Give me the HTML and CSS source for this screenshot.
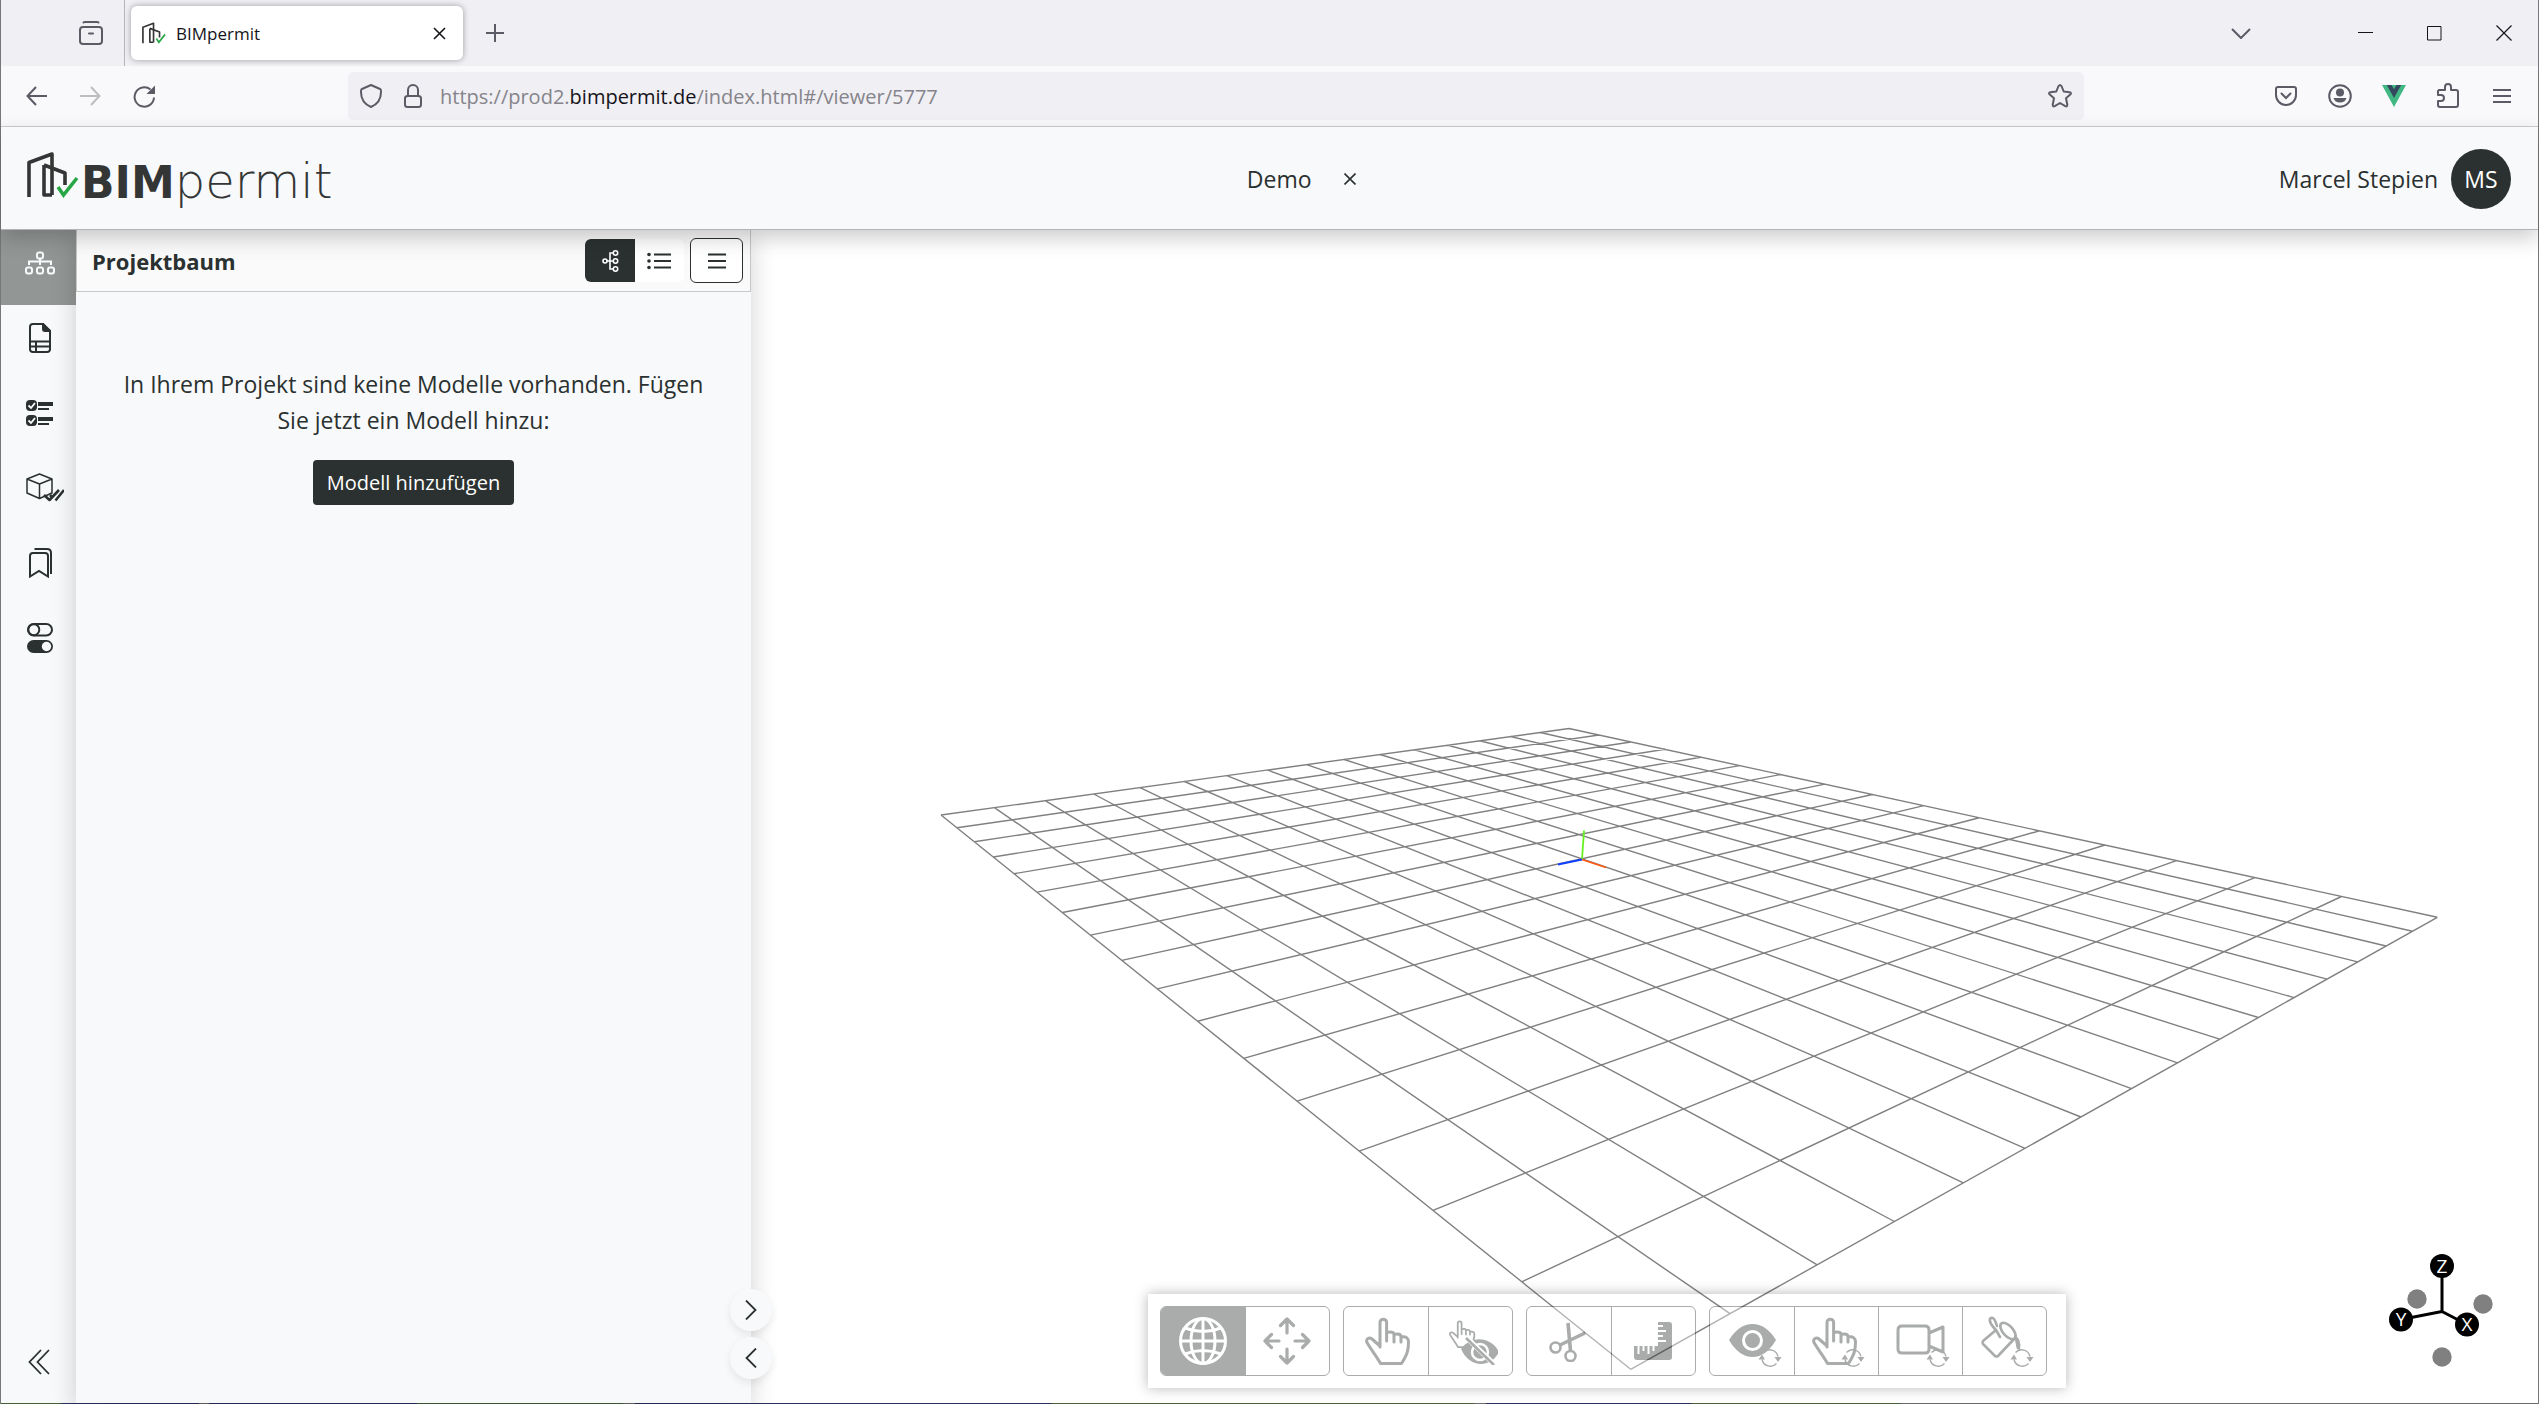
FILE: index.html
```html
<!DOCTYPE html>
<html lang="de">
<head>
<meta charset="utf-8">
<title>BIMpermit</title>
<link rel="stylesheet" href="styles.css">
</head>
<body>
<svg class="defs" aria-hidden="true">
  <symbol id="mark" viewBox="0 0 52 46">
    <g fill="none" stroke="#343635" stroke-width="3.6" stroke-linejoin="round">
      <path d="M2 45V10.500L25 2v41"/>
      <path d="M17 13v30h8M17 13l21 8v12"/>
    </g>
    <path d="M31 35l5.500 8L50 26" fill="none" stroke="#28a745" stroke-width="3.600"/>
  </symbol>
  <symbol id="hand" viewBox="0 0 48 48">
    <path d="M15 30V5.500a3.300 3.300 0 0 1 6.600 0V24M21.600 15.500c4-1 7.400-.5 7.400 2V25M29 17.500c4-1 7-.5 7 2.500v5M36 20c5-1 7.500 1 7.500 5 0 8-1 12-7 21.500H15.500C12 40 7 34 2 25.500c-1.500-4 2.500-5.500 5-3.500l8 7" fill="none" stroke="currentColor" stroke-width="3" stroke-linecap="round" stroke-linejoin="round"/>
  </symbol>
  <symbol id="cycle" viewBox="0 0 24 20">
    <path d="M5.500 4.500A8.500 8.500 0 0 1 20 8.500M18.500 15.500A8.500 8.500 0 0 1 4 11.500" fill="none" stroke="currentColor" stroke-width="1.400"/>
    <path d="M.5 11.500l3.500-5 3 5zM16.500 9h7L20 14z" fill="currentColor"/>
  </symbol>
</svg>

<div class="window">
  <div class="tabbar">
    <button class="tool recent" aria-label="Tabs"><svg width="24" height="24" viewBox="0 0 24 24" fill="none" stroke="#5b5b66" stroke-width="2" stroke-linecap="round"><path d="M4.500 1.500C5 1 5.500 1 6 1h12q1 0 1.500.5"/><rect x="1" y="6" width="22" height="17" rx="3"/><path d="M10 12.500h4"/></svg></button>
    <div class="tab">
      <svg class="favicon" width="24" height="22"><use href="#mark"/></svg>
      <span class="tab-title">BIMpermit</span>
      <button class="tab-close" aria-label="Tab schließen"><svg width="13" height="13" viewBox="0 0 13 13" stroke="#15141a" stroke-width="1.600"><path d="M1 1l11 11M12 1L1 12"/></svg></button>
    </div>
    <button class="tool" aria-label="Neuer Tab"><svg width="18" height="18" viewBox="0 0 18 18" stroke="#5b5b66" stroke-width="2"><path d="M9 0v18M0 9h18"/></svg></button>
    <span class="spring"></span>
    <button class="tool list-tabs" aria-label="Alle Tabs"><svg width="20" height="11" viewBox="0 0 20 11" fill="none" stroke="#5b5b66" stroke-width="2"><path d="M1 1l9 9 9-9"/></svg></button>
    <button class="winbtn" aria-label="Minimieren"><svg width="15" height="15" viewBox="0 0 15 15" stroke="#15141a"><path d="M0 6.500h15"/></svg></button>
    <button class="winbtn" aria-label="Maximieren"><svg width="15" height="15" viewBox="0 0 15 15" stroke="#15141a" fill="none"><path d="M.5.5h13.500v13.500H.5z"/></svg></button>
    <button class="winbtn" aria-label="Schließen"><svg width="16" height="16" viewBox="0 0 16 16" stroke="#15141a" stroke-width="1.200"><path d="M.5.5l15 15M15.500.5l-15 15"/></svg></button>
  </div>

  <div class="navbar">
    <button class="tool" aria-label="Zurück"><svg width="21" height="20" viewBox="0 0 21 20" fill="none" stroke="#5b5b66" stroke-width="2"><path d="M10 1L1.500 10l8.500 9M1.500 10H21"/></svg></button>
    <button class="tool" aria-label="Vor"><svg width="21" height="20" viewBox="0 0 21 20" fill="none" stroke="#bdbdc2" stroke-width="2"><path d="M11 1l8.500 9-8.500 9M19.500 10H0"/></svg></button>
    <button class="tool" aria-label="Neu laden"><svg width="23" height="23" viewBox="0 0 23 23"><path d="M21 12.500A9.700 9.700 0 1 1 17.500 4.500" fill="none" stroke="#5b5b66" stroke-width="2"/><path d="M22 .5V9h-8.500z" fill="#5b5b66"/></svg></button>
    <div class="urlbar">
      <svg width="22" height="24" viewBox="0 0 22 24" fill="none" stroke="#5b5b66" stroke-width="2" stroke-linejoin="round"><path d="M11 1l9 4c1 0 1 1 1 3 0 7-3 12-10 15C4 20 1 15 1 8c0-2 0-3 1-3z"/></svg>
      <svg width="18" height="24" viewBox="0 0 18 24" fill="none" stroke="#5b5b66" stroke-width="2"><rect x="1" y="12" width="16" height="11" rx="2.500"/><path d="M4 12V6a5 5 0 0 1 10 0v6"/></svg>
      <span class="url">https://prod2.<b>bimpermit.de</b>/index.html#/viewer/5777</span>
      <button class="star" aria-label="Lesezeichen"><svg width="24" height="24" viewBox="0 0 24 24" fill="none" stroke="#5b5b66" stroke-width="2" stroke-linejoin="round"><path d="M12 1l1.500 1 2.200 5.500 6 .7c1.300.3 1.500 1.300.8 2L18 14.200l1.300 6.500c0 1.500-.8 2-2 1.500L12 19l-5.300 3.200c-1.200.5-2 0-2-1.500L6 14.200l-4.500-4c-.7-.7-.5-1.700.8-2l6-.7L10.500 2z"/></svg></button>
    </div>
    <button class="tool" aria-label="Pocket"><svg width="22" height="20" viewBox="0 0 22 20" fill="none" stroke="#5b5b66" stroke-width="2" stroke-linecap="round"><path d="M3 1h16q2 0 2 2v6a10 10 0 0 1-20 0V3q0-2 2-2z"/><path d="M6.500 7.500L11 12l4.500-4.500"/></svg></button>
    <button class="tool" aria-label="Konto"><svg width="24" height="24" viewBox="0 0 24 24"><circle cx="12" cy="12" r="10.800" fill="none" stroke="#5b5b66" stroke-width="2"/><circle cx="12" cy="8.500" r="4" fill="#5b5b66"/><path d="M5.500 14h13q-1.500 4.500-6.500 4.500T5.500 14z" fill="#5b5b66"/></svg></button>
    <button class="tool" aria-label="Vue"><svg width="24" height="22" viewBox="0 0 24 22"><path d="M0 0h24L12 22z" fill="#41b883"/><path d="M4.800 0h4.700L12 4.200 14.500 0h4.700L12 13z" fill="#35495e"/></svg></button>
    <button class="tool" aria-label="Erweiterungen"><svg width="22" height="26" viewBox="0 0 22 26" fill="none" stroke="#5b5b66" stroke-width="2" stroke-linejoin="round"><path d="M2 7h6V4a3 3 0 0 1 6 0v3h5q2 0 2 2v13q0 2-2 2H3q-2 0-2-2v-4h3a3 3 0 0 0 0-6H1V8z"/></svg></button>
    <button class="tool" aria-label="Menü"><svg width="18" height="16" viewBox="0 0 18 16" stroke="#5b5b66" stroke-width="2"><path d="M0 2h18M0 8h18M0 14h18"/></svg></button>
  </div>

  <header class="header">
    <a class="logo" href="#"><svg width="52" height="46"><use href="#mark"/></svg><span class="logo-bim">BIM</span><span class="logo-permit">permit</span></a>
    <div class="project"><span>Demo</span><button class="project-close" aria-label="Projekt schließen"><svg width="12" height="12" viewBox="0 0 12 12" stroke="#2a3130" stroke-width="1.600"><path d="M.5.5l11 11M11.500.5l-11 11"/></svg></button></div>
    <div class="user"><span>Marcel Stepien</span><span class="avatar">MS</span></div>
  </header>

  <main class="main">
    <nav class="rail">
      <button class="rail-btn active" aria-label="Projektbaum"><svg width="30" height="24" viewBox="0 0 30 24" fill="none" stroke="#f8f9fb" stroke-width="2"><rect x="12" y="1.500" width="6" height="6" rx="2"/><path d="M15 8v6M4 14v-3.500h22V14"/><rect x="1" y="16.500" width="6" height="6" rx="2"/><rect x="12" y="16.500" width="6" height="6" rx="2"/><rect x="23" y="16.500" width="6" height="6" rx="2"/></svg></button>
      <button class="rail-btn" aria-label="Dokumente"><svg width="22" height="30" viewBox="0 0 22 30" fill="none" stroke="#2a3130" stroke-width="2"><path d="M4 1h10l7 7v18q0 3-3 3H4q-3 0-3-3V4q0-3 3-3zM1 18.500h20M1 23.500h20M7 18.500V29"/><path d="M14 1v5q0 2 2 2h5z" fill="#2a3130"/></svg></button>
      <button class="rail-btn" aria-label="Prüfliste"><svg width="30" height="28" viewBox="0 0 30 28"><g fill="#2a3130"><rect x="1" y="1" width="11" height="11" rx="4"/><rect x="1" y="16" width="11" height="11" rx="4"/><path d="M13 3h15v4H13zM13 9h11v2H13zM13 18h15v4H13zM13 24h11v2H13z"/></g><path d="M3.500 6.500L6 9l4-5M3.500 21.500L6 24l4-5" stroke="#fff" stroke-width="1.800" fill="none"/></svg></button>
      <button class="rail-btn" aria-label="Modellprüfung"><svg class="wide" width="38" height="29" viewBox="0 0 38 29" fill="none" stroke="#2a3130" stroke-linejoin="round"><path d="M1 6l12.500-5L26 6v14l-12.500 5.500L1 20zM1 6l12.500 5L26 6M13.500 11v14" stroke-width="1.500"/><path d="M18 22l5.500 5L33 17M29.500 27.500L38 17M24 22l2 2" stroke-width="2.600"/></svg></button>
      <button class="rail-btn" aria-label="Lesezeichen"><svg width="23" height="30" viewBox="0 0 23 30" fill="none" stroke="#2a3130" stroke-width="2"><path d="M1 28.500V8q0-3 3-3h12q3 0 3 3v20.500l-9-5.500zM5.500 1H18q4 0 4 4v21"/></svg></button>
      <button class="rail-btn" aria-label="Einstellungen"><svg width="26" height="30" viewBox="0 0 26 30"><rect x="1" y="1" width="24" height="11.500" rx="5.700" fill="none" stroke="#2a3130" stroke-width="2"/><circle cx="6.800" cy="6.700" r="5.500" fill="none" stroke="#2a3130" stroke-width="2"/><rect y="17" width="26" height="13" rx="6.500" fill="#2a3130"/><circle cx="19.500" cy="23.500" r="4.700" fill="#f8f9fb"/></svg></button>
      <span class="spring"></span>
      <button class="rail-btn collapse" aria-label="Einklappen"><svg width="22" height="26" viewBox="0 0 22 26" fill="none" stroke="#2a3130" stroke-width="1.800"><path d="M13 1L1.500 13 13 25M21 1L9.500 13 21 25"/></svg></button>
    </nav>

    <section class="panel">
      <div class="panel-head">
        <h1>Projektbaum</h1>
        <div class="switch">
          <button class="switch-btn on" aria-label="Baum"><svg width="17" height="22" viewBox="0 0 17 22" fill="none" stroke="#fff" stroke-width="1.600"><circle cx="3" cy="11" r="2"/><circle cx="13.500" cy="3" r="2.200"/><circle cx="13.500" cy="11" r="2.200"/><circle cx="13.500" cy="19" r="2.200"/><path d="M5 11h6M11 3H8v16h3"/></svg></button>
          <button class="switch-btn" aria-label="Liste"><svg width="24" height="18" viewBox="0 0 24 18" stroke="#2a3130" stroke-width="1.800" fill="#2a3130"><path d="M7 2.500h17M7 9h17M7 15.500h17"/><g stroke="none"><circle cx="2" cy="2.500" r="1.800"/><circle cx="2" cy="9" r="1.800"/><circle cx="2" cy="15.500" r="1.800"/></g></svg></button>
        </div>
        <button class="menu-btn" aria-label="Optionen"><svg width="18" height="16" viewBox="0 0 18 16" stroke="#2a3130" stroke-width="1.800"><path d="M0 1.500h18M0 8h18M0 14.500h18"/></svg></button>
      </div>
      <div class="empty">
        <p>In Ihrem Projekt sind keine Modelle vorhanden. Fügen Sie jetzt ein Modell hinzu:</p>
        <button class="primary">Modell hinzufügen</button>
      </div>
      <div class="edge">
        <button class="edge-btn" aria-label="Erweitern"><svg width="12" height="20" viewBox="0 0 12 20" fill="none" stroke="#2a3130" stroke-width="1.800"><path d="M1 .5L10.500 10 1 19.500"/></svg></button>
        <button class="edge-btn" aria-label="Verkleinern"><svg width="12" height="20" viewBox="0 0 12 20" fill="none" stroke="#2a3130" stroke-width="1.800"><path d="M11 .5L1.500 10 11 19.500"/></svg></button>
      </div>
    </section>

    <section class="viewer">
      <svg class="scene" viewBox="0 0 1787 1173" fill="none">
        <path id="grid" stroke="#808080" stroke-width="1.400"/>
        <g stroke-width="1.800"><path d="M831 629.500l2-29" stroke="#66f020"/><path d="M831 629.500l24 8" stroke="#ff5a10"/><path d="M831 629.500l-24 5" stroke="#1040ff"/></g>
      </svg>
      <div class="toolbar">
        <div class="group">
          <button class="vbtn on" aria-label="Orbit"><svg width="48" height="48" viewBox="0 0 48 48" fill="none" stroke="currentColor" stroke-width="3"><circle cx="24" cy="24" r="22.500"/><ellipse cx="24" cy="24" rx="12" ry="22.500"/><path d="M24 1v46M1 24h46M6 11q18 7 36 0M6 37q18-7 36 0"/></svg></button>
          <button class="vbtn" aria-label="Verschieben"><svg width="48" height="48" viewBox="0 0 48 48" fill="none" stroke="currentColor" stroke-width="3.200" stroke-linecap="round" stroke-linejoin="round"><path d="M24 16V2M17.500 8.500L24 2l6.500 6.500M24 32v14M17.500 39.500L24 46l6.500-6.500M16 24H2M8.500 17.500L2 24l6.500 6.500M32 24h14M39.500 17.500L46 24l-6.500 6.500"/></svg></button>
        </div>
        <div class="group">
          <button class="vbtn offset" aria-label="Auswählen"><svg width="48" height="48"><use href="#hand"/></svg></button>
          <button class="vbtn offset" aria-label="Ausblenden"><svg width="50" height="48" viewBox="0 0 50 48"><use href="#hand" width="28" height="28" x="1" y="3"/><path d="M13 32C22 19 42 18 51 35 43 51 22 52 13 32z" fill="currentColor"/><circle cx="32" cy="35" r="8" fill="none" stroke="#fff" stroke-width="2.500"/><path d="M20 22l29 28" stroke="#fff" stroke-width="5"/><path d="M18 21l28 27" stroke="currentColor" stroke-width="2.600"/></svg></button>
        </div>
        <div class="group">
          <button class="vbtn" aria-label="Schneiden"><svg width="40" height="42" viewBox="0 0 40 42" fill="none" stroke="currentColor" stroke-width="2.600"><circle cx="6.500" cy="27.500" r="5"/><circle cx="21.500" cy="36" r="5"/><path d="M11 25l25-12M21.500 31L19 3" stroke-width="3.600"/></svg></button>
          <button class="vbtn" aria-label="Messen"><svg width="40" height="40" viewBox="0 0 40 40"><path d="M25 1h11q3 0 3 3v32q0 3-3 3H4q-3 0-3-3V25h24z" fill="currentColor"/><path d="M24 5h6M24 10h9M24 15h6M24 20h9M5.500 24v9M10.500 24v6M15.500 24v9M20.500 24v6" stroke="#fff" stroke-width="2"/></svg></button>
        </div>
        <div class="group">
          <button class="vbtn offset" aria-label="Sichtbarkeit zurücksetzen"><svg width="54" height="52" viewBox="0 0 54 52"><path d="M1 25Q11 9 24.500 9T48 25Q38 42 24.500 42T1 25z" fill="currentColor"/><circle cx="24.500" cy="25.500" r="9" fill="none" stroke="#fff" stroke-width="3"/><use href="#cycle" x="30" y="33" width="24" height="20"/></svg></button>
          <button class="vbtn offset" aria-label="Auswahl zurücksetzen"><svg width="54" height="52" viewBox="0 0 54 52"><use href="#hand" width="48" height="48" y="2"/><use href="#cycle" x="29" y="33" width="24" height="20"/></svg></button>
          <button class="vbtn offset" aria-label="Kamera zurücksetzen"><svg width="54" height="52" viewBox="0 0 54 52"><path d="M6 11h23q4 0 4 4v19q0 4-4 4H6q-4 0-4-4V15q0-4 4-4zM33 18l14-6v25l-14-6" fill="none" stroke="currentColor" stroke-width="3" stroke-linejoin="round"/><use href="#cycle" x="30" y="33" width="24" height="20"/></svg></button>
          <button class="vbtn offset" aria-label="Farben zurücksetzen"><svg width="54" height="52" viewBox="0 0 54 52"><g fill="none" stroke="currentColor" stroke-width="2.600" stroke-linejoin="round" stroke-linecap="round"><path d="M16 15L3 26q-1 2 0 3l12 12q2 1 3 0l17-18M16 15l4 7M16 15C9 8 9 4 11 3s4 1 6 8"/><ellipse cx="28" cy="16" rx="5" ry="10" transform="rotate(-42 28 16)"/></g><path d="M34 20q8 3 6 15-4 0-4-5z" fill="currentColor"/><use href="#cycle" x="30" y="33" width="24" height="20"/></svg></button>
        </div>
      </div>
      <svg class="axes" width="110" height="120" viewBox="0 0 110 120">
        <g fill="#808080"><circle cx="31" cy="51" r="9.700"/><circle cx="97" cy="56" r="9.700"/><circle cx="56" cy="109" r="9.700"/></g>
        <path d="M56 18v45.500L15 71.500M56 63.500l25 13" fill="none" stroke="#000" stroke-width="3"/>
        <circle cx="56" cy="18" r="12"/><circle cx="15" cy="71.500" r="12"/><circle cx="81" cy="76.500" r="12"/>
        <g class="axis-label"><text x="56" y="25">Z</text><text x="15" y="78">Y</text><text x="81" y="83">X</text></g>
      </svg>
    </section>
  </main>
  <div class="desktop-strip"></div>
</div>
<script src="grid.js"></script>
</body>
</html>
```
FILE: grid.js
```js
// Draws the ground plane: 16 x 16 cells, projected from the unit square onto four screen corners.
const corners = [[190, 585], [818, 498.5], [1686.3, 687.3], [879.7, 1139.3]];
const cells = 16;
const [[x0, y0], [x1, y1], [x2, y2], [x3, y3]] = corners;
const dx1 = x1 - x2, dx2 = x3 - x2, sx = x0 - x1 + x2 - x3;
const dy1 = y1 - y2, dy2 = y3 - y2, sy = y0 - y1 + y2 - y3;
const det = dx1 * dy2 - dx2 * dy1;
const g = (sx * dy2 - dx2 * sy) / det;
const h = (dx1 * sy - sx * dy1) / det;

function project(u, v) {
  const w = g * u + h * v + 1;
  const x = ((x1 - x0 + g * x1) * u + (x3 - x0 + h * x3) * v + x0) / w;
  const y = ((y1 - y0 + g * y1) * u + (y3 - y0 + h * y3) * v + y0) / w;
  return x.toFixed(1) + " " + y.toFixed(1);
}

let d = "";
for (let i = 0; i <= cells; i++) {
  const t = i / cells;
  d += `M${project(t, 0)}L${project(t, 1)}M${project(0, t)}L${project(1, t)}`;
}
document.getElementById("grid").setAttribute("d", d);
```
FILE: styles.css
```css
* { box-sizing: border-box; }
body {
  margin: 0;
  font-family: "Open Sans", "Noto Sans", sans-serif;
  font-size: 23px;
  color: #2a3130;
}
button {
  display: flex;
  align-items: center;
  justify-content: center;
  margin: 0;
  padding: 0;
  border: 0;
  background: none;
  color: inherit;
  font: inherit;
}
svg { flex: none; }
.defs { position: absolute; width: 0; height: 0; }
.spring { flex: 1; }

.window {
  display: flex;
  flex-direction: column;
  height: 100vh;
  border: solid #77777a;
  border-width: 0 1px;
}
.desktop-strip {
  flex: none;
  height: 1px;
  background: linear-gradient(90deg, #46603a 60px, #2c3060 60px 198px, #6a6a6a 198px 208px, #2c3060 208px 416px, #46603a 416px 622px, #6a6a6a 622px 634px, #2c3060 634px 1050px, #46603a 1050px 1473px, #6a6a6a 1473px 1485px, #2c3060 1485px 1690px, #46603a 1690px 1900px, #6a6a6a 1900px);
}

/* Browser chrome */
.tabbar {
  display: flex;
  align-items: center;
  height: 66px;
  flex: none;
  background: #f0eff4;
}
.tool { width: 54px; height: 48px; }
.recent { margin-left: 63px; }
.tab {
  display: flex;
  align-items: center;
  width: 332px;
  height: 54px;
  margin: 0 5px 0 13px;
  padding: 0 10px 0 11px;
  border-radius: 6px;
  background: #fff;
  box-shadow: 0 0 6px rgba(0, 0, 0, .35);
  color: #15141a;
  font-size: 17px;
  position: relative;
}
.tab::before {
  content: "";
  position: absolute;
  left: -7px;
  top: -6px;
  width: 1px;
  height: 66px;
  background: #b4b3b9;
}
.tab-title { flex: 1; margin-left: 10px; }
.tab-close { width: 28px; height: 28px; }
.list-tabs { margin-right: 63px; }
.winbtn { width: 69px; height: 66px; }

.navbar {
  display: flex;
  align-items: center;
  flex: none;
  height: 61px;
  padding: 0 9px 0 8px;
  border-bottom: 1px solid #cccccf;
  background: #f9f9fb;
}
.urlbar {
  display: flex;
  align-items: center;
  flex: 1;
  height: 48px;
  margin: 0 175px 0 177px;
  padding: 0 12px;
  border-radius: 6px;
  background: #f0eff4;
  gap: 22px;
}
.url { flex: 1; margin-left: -4px; color: #85848a; font-size: 20px; }
.url b { color: #15141a; font-weight: 400; }

/* Application header */
.header {
  display: flex;
  align-items: center;
  justify-content: space-between;
  flex: none;
  height: 103px;
  padding: 2px 27px 0 26px;
  border-bottom: 1px solid #b2b4b6;
  background: #f8f9fb;
  box-shadow: 0 8px 20px rgba(0, 0, 0, .2);
  position: relative;
  z-index: 2;
}
.logo {
  display: flex;
  align-items: baseline;
  color: #343635;
  font-family: "DejaVu Sans", sans-serif;
  font-size: 44px;
  line-height: 48px;
  text-decoration: none;
}
.logo-bim { margin-left: 2px; font-weight: 700; }
.logo-permit { font-size: 48px; font-weight: 200; }
.project { display: flex; align-items: center; gap: 23px; }
.project-close { width: 30px; height: 30px; }
.user { display: flex; align-items: center; gap: 13px; }
.avatar {
  display: flex;
  align-items: center;
  justify-content: center;
  width: 60px;
  height: 60px;
  border-radius: 50%;
  background: #2a3130;
  color: #fff;
}

.main { display: flex; flex: 1; min-height: 0; }
.rail {
  display: flex;
  flex-direction: column;
  width: 75px;
  flex: none;
  background: #f8f9fb;
}
.rail-btn { width: 100%; height: 75px; padding: 0 0 10px 3px; }
.rail-btn.active { background: #929695; }
.rail-btn .wide { margin-left: 10px; }
.rail-btn.collapse { height: 82px; padding: 0; }

.panel {
  display: flex;
  flex-direction: column;
  flex: none;
  width: 675px;
  background: #f8f9fb;
  box-shadow: 0 8px 24px rgba(0, 0, 0, .18);
  position: relative;
  z-index: 1;
}
.panel-head {
  display: flex;
  align-items: center;
  height: 62px;
  padding: 0 7px 0 15px;
  border: 1px solid #c6c7c9;
  border-top: 0;
  background: #fafafa;
}
.panel-head h1 { flex: 1; margin: 0; font-size: 22px; font-weight: 700; }
.switch { display: flex; margin-right: 6px; }
.switch-btn { width: 49px; height: 43px; padding-right: 2px; border-radius: 0 6px 6px 0; background: #fff; }
.switch-btn.on { width: 50px; padding: 0; border-radius: 6px 0 0 6px; background: #2a3130; }
.menu-btn { width: 53px; height: 45px; border: 1px solid #2a3130; border-radius: 6px; background: #fff; }
.empty {
  display: flex;
  flex-direction: column;
  align-items: center;
  padding: 74px 36px;
}
.empty p { margin: 0 0 22px; line-height: 36px; text-align: center; }
.primary {
  height: 45px;
  padding: 0 14px;
  border-radius: 4px;
  background: #2a3130;
  color: #fff;
  font-size: 20px;
}
.edge {
  display: flex;
  flex-direction: column;
  gap: 6px;
  position: absolute;
  right: -21px;
  bottom: 24px;
}
.edge-btn {
  width: 42px;
  height: 42px;
  border-radius: 50%;
  background: #f8f9fb;
  box-shadow: 0 4px 8px rgba(0, 0, 0, .08);
}

.viewer { flex: 1; min-width: 0; background: #fff; position: relative; overflow: hidden; }
.scene { display: block; width: 100%; height: 100%; }
.toolbar {
  display: flex;
  gap: 13px;
  position: absolute;
  left: calc(50% - 497px);
  bottom: 15px;
  padding: 12px 19px 12px 12px;
  box-shadow: 0 0 12px rgba(42, 49, 48, .35);
}
.group {
  display: flex;
  overflow: hidden;
  border: 1px solid #2a3130;
  border-radius: 6px;
  background: #fff;
  opacity: .4;
}
.vbtn { width: 84px; height: 68px; }
.vbtn + .vbtn { border-left: 1px solid #2a3130; }
.vbtn.on { background: #2a3130; color: #fff; }
.vbtn.offset { padding-left: 6px; }
.axes { position: absolute; right: 42px; bottom: 35px; }
.axis-label {
  fill: #fff;
  font-family: "Open Sans", sans-serif;
  font-size: 19px;
  text-anchor: middle;
}
```
